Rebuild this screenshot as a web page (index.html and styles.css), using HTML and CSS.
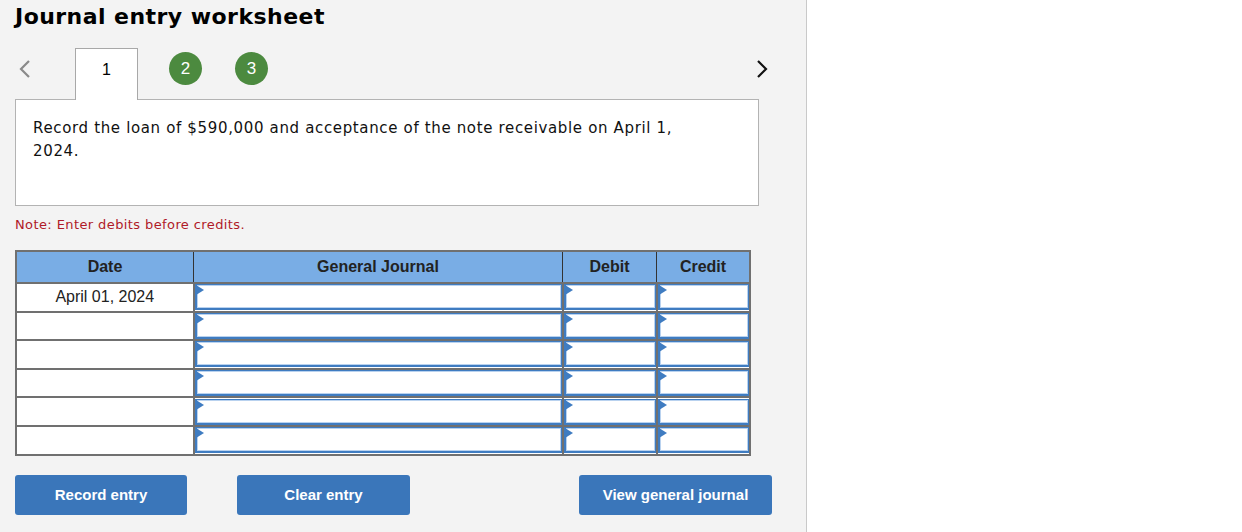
FILE: index.html
```html
<!DOCTYPE html>
<html>
<head>
<meta charset="utf-8">
<link rel="stylesheet" href="styles.css">
</head>
<body>
<div class="panel">
  <h1 class="title">Journal entry worksheet</h1>
  <div class="tabs">
    <span class="nav prev"><svg width="14" height="22" viewBox="0 0 14 22"><path d="M11 3 L3 11 L11 19" fill="none" stroke="#8a8a8a" stroke-width="2.2"/></svg></span>
    <span class="tab active">1</span>
    <span class="step">2</span>
    <span class="step step3">3</span>
    <span class="spacer"></span>
    <span class="nav next"><svg width="14" height="22" viewBox="0 0 14 22"><path d="M3 3 L11 11 L3 19" fill="none" stroke="#111" stroke-width="2.2"/></svg></span>
  </div>
  <div class="prompt">Record the loan of $590,000 and acceptance of the note receivable on April 1, 2024.</div>
  <p class="note">Note: Enter debits before credits.</p>
  <table class="journal">
    <thead>
      <tr><th class="c-date">Date</th><th class="c-gj">General Journal</th><th class="c-dr">Debit</th><th class="c-cr">Credit</th></tr>
    </thead>
    <tbody>
      <tr><td class="date">April 01, 2024</td><td class="in"><div class="box"></div></td><td class="in"><div class="box"></div></td><td class="in"><div class="box"></div></td></tr>
      <tr><td class="date"></td><td class="in"><div class="box"></div></td><td class="in"><div class="box"></div></td><td class="in"><div class="box"></div></td></tr>
      <tr><td class="date"></td><td class="in"><div class="box"></div></td><td class="in"><div class="box"></div></td><td class="in"><div class="box"></div></td></tr>
      <tr><td class="date"></td><td class="in"><div class="box"></div></td><td class="in"><div class="box"></div></td><td class="in"><div class="box"></div></td></tr>
      <tr><td class="date"></td><td class="in"><div class="box"></div></td><td class="in"><div class="box"></div></td><td class="in"><div class="box"></div></td></tr>
      <tr><td class="date"></td><td class="in"><div class="box"></div></td><td class="in"><div class="box"></div></td><td class="in"><div class="box"></div></td></tr>
    </tbody>
  </table>
  <div class="actions">
    <button class="btn b-record">Record entry</button>
    <button class="btn b-clear">Clear entry</button>
    <button class="btn b-view">View general journal</button>
  </div>
</div>
</body>
</html>
```
FILE: styles.css
```css
html, body { margin: 0; padding: 0; background: #fff; }
.panel {
  width: 807px;
  height: 532px;
  box-sizing: border-box;
  background: #f3f3f3;
  border-right: 1px solid #c9c9c9;
  padding: 4px 0 0 15px;
  font-family: "DejaVu Sans", Verdana, sans-serif;
}
.title {
  margin: 0;
  font-family: "DejaVu Sans", Verdana, sans-serif;
  font-size: 22px;
  font-weight: bold;
  color: #000;
  line-height: 26px;
  letter-spacing: 0.45px;
}
.tabs {
  display: flex;
  align-items: center;
  margin-top: 18px;
  width: 744px;
  height: 51px;
}
.nav { display: flex; align-items: center; margin-top: -10px; }
.prev { margin-left: 3px; width: 57px; }
.next { margin-right: -10px; }
.tab {
  width: 63px;
  height: 52px;
  box-sizing: border-box;
  border: 1px solid #a8a8a8;
  border-bottom: none;
  background: #fff;
  font-family: "Liberation Sans", Arial, sans-serif;
  font-size: 16px;
  display: flex;
  justify-content: center;
  padding-top: 12px;
  position: relative;
  z-index: 2;
  margin-bottom: -1px;
  align-self: flex-start;
}
.step {
  width: 33px;
  height: 33px;
  border-radius: 50%;
  background: #4c8a3f;
  color: #fff;
  font-family: "Liberation Sans", Arial, sans-serif;
  font-size: 17px;
  display: flex;
  align-items: center;
  justify-content: center;
  margin-left: 31px;
  margin-top: -10px;
}
.step3 { margin-left: 33px; }
.spacer { flex: 1; }
.prompt {
  width: 744px;
  height: 107px;
  box-sizing: border-box;
  background: #fff;
  border: 1px solid #b3b3b3;
  padding: 17px 60px 0 17px;
  font-family: "DejaVu Sans", Verdana, sans-serif;
  font-size: 15px;
  line-height: 23px;
  letter-spacing: 0.65px;
  color: #111;
}
.note {
  margin: 10px 0 0 0;
  font-family: "DejaVu Sans", Verdana, sans-serif;
  font-size: 13px;
  line-height: 18px;
  letter-spacing: 0.4px;
  color: #b01a28;
}
.journal {
  margin-top: 16px;
  border-collapse: collapse;
  border: 2px solid #707070;
  font-family: "Liberation Sans", Arial, sans-serif;
  table-layout: fixed;
}
.journal th {
  background: #79ade5;
  color: #222;
  font-size: 16px;
  font-weight: bold;
  height: 30px;
  padding: 0;
  border: 1px solid #333;
  border-top: none;
}
.c-date { width: 176px; }
.c-gj { width: 368px; }
.c-dr { width: 93px; }
.c-cr { width: 92px; }
.journal td {
  height: 26.6px;
  padding: 0;
  border: 2px solid #707070;
  background: #fff;
}
.journal td.date {
  text-align: center;
  font-size: 16px;
  color: #222;
}
.box {
  box-sizing: border-box;
  height: 26px;
  border: 1px solid #3f7cc1;
  border-width: 1px 1px 2px 2px;
  box-shadow: inset 0 0 0 1px #b9d2ef;
  background: #fff;
  position: relative;
}
.box::before {
  content: "";
  position: absolute;
  left: -1px;
  top: 0;
  border-left: 8px solid #3f7cc1;
  border-top: 5px solid transparent;
  border-bottom: 5px solid transparent;
}
.actions {
  display: flex;
  margin-top: 19px;
  width: 757px;
}
.btn {
  height: 40px;
  background: #3a76ba;
  color: #fff;
  border: none;
  border-radius: 3px;
  font-family: "Liberation Sans", Arial, sans-serif;
  font-weight: bold;
  font-size: 15px;
  padding: 0 0 1px 0;
}
.b-record { width: 172px; }
.b-clear { width: 173px; margin-left: 50px; }
.b-view { width: 193px; margin-left: auto; }
```
